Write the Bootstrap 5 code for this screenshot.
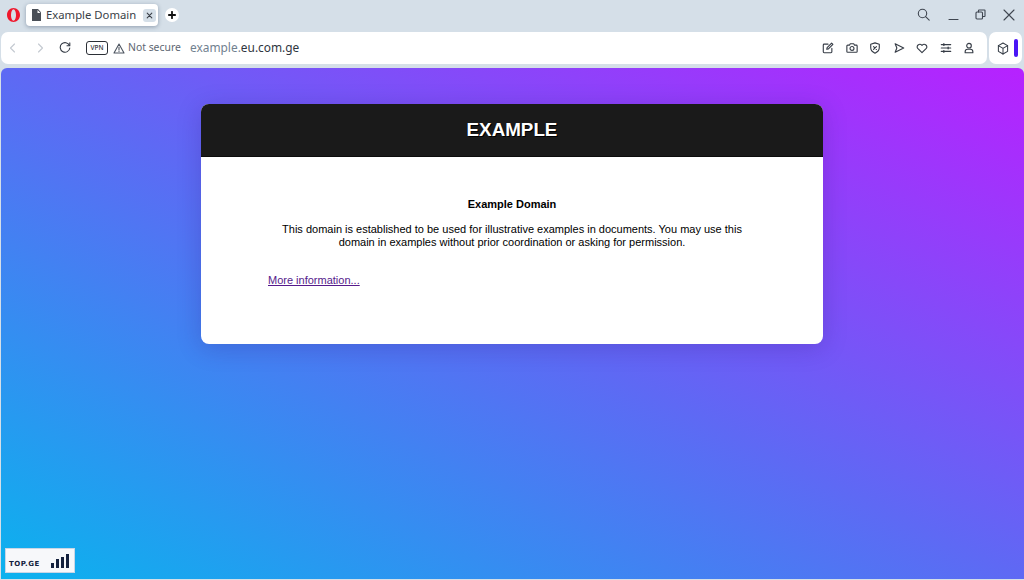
<!DOCTYPE html>
<html lang="en">
<head>
  <meta charset="UTF-8" />
  <meta name="viewport" content="width=device-width, initial-scale=1" />
  <title>Example Domain</title>
  <link href="https://cdn.jsdelivr.net/npm/bootstrap@5.3.0/dist/css/bootstrap.min.css" rel="stylesheet" />
  <style>
    html, body { height: 100%; overflow: hidden; }
    body { background: #d5dfe8; font-family: "Noto Sans", sans-serif; color: #3b4450; }
    svg { display: block; fill: none; stroke: currentColor; stroke-width: 1.1; stroke-linecap: round; stroke-linejoin: round; flex: none; }

    .tabstrip { height: 32px; padding: 4px 0 0 7px; }
    .opera-logo { margin-right: 6px; }
    .tab-pill { width: 132px; height: 22px; background: #fff; border-radius: 4px; box-shadow: 0 1px 4px rgba(40, 60, 90, .4); padding: 0 2px 0 5px; font-size: 11.3px; color: #3a3f47; white-space: nowrap; }
    .tab-x { width: 13px; height: 13px; background: #d5dfe8; border-radius: 3px; }
    .new-tab { width: 14px; height: 14px; margin-left: 7px; background: #fff; border-radius: 50%; color: #111; }
    .win-btns { margin-right: 1px; }
    .win-btns > div { width: 28.5px; display: flex; justify-content: center; }

    .toolbar { height: 33px; margin-left: 1px; gap: 2px; }
    .addr-bar { width: 986px; height: 32px; background: #fff; border-radius: 7px; padding: 0 12px 0 7px; }
    .side-box { width: 33px; height: 32px; background: #fff; border-radius: 7px; padding-left: 8px; gap: 5px; }
    .side-pip { width: 4px; height: 18px; background: #4a16f5; border-radius: 2px; }
    .vpn-tag { width: 22px; height: 14px; border: 1px solid #2b2f36; border-radius: 3px; font-size: 6.5px; font-weight: 500; line-height: 12px; text-align: center; color: #2b2f36; margin: 0 5px 0 15px; }
    .not-secure { font-size: 10.4px; color: #5d6672; width: 53px; white-space: nowrap; margin-left: 3px; }
    .url-text { font-size: 11.9px; color: #2f3640; margin-left: 9px; white-space: nowrap; }
    .url-text span { color: #71818f; }
    .tool-icons { gap: 11.5px; color: #363c46; }
    .tool-icons svg { stroke-width: 1.3; }

    .stage { height: 511px; margin: 3px 0 1px 1px; border-radius: 6px 6px 0 0; background: linear-gradient(to top right, #0bb2ee 0%, #5e69f4 50%, #b721ff 100%); padding: 36px 1px 0 0; font-family: "Liberation Sans", Arial, sans-serif; }
    .site-card { width: 622px; height: 240px; margin: 0 auto; background: #fff; border-radius: 8px; overflow: hidden; box-shadow: 0 4px 24px rgba(40, 20, 120, .22); color: #000; flex: none; }
    .site-head { height: 53px; background: #1a1a1a; border-bottom: 1px solid #0c0c0c; color: #fff; font-size: 18.8px; font-weight: 700; line-height: 52px; text-align: center; text-shadow: 1px 1px 0 #000; }
    .site-body { font-size: 11px; line-height: 13px; padding: 40px 67px 0; }
    .site-body h1 { font-size: 11px; font-weight: 700; line-height: 14px; margin: 0 0 12px; text-align: center; }
    .site-body p { width: 488px; text-align: center; margin: 0 0 25px; }
    .site-body a { color: #551a8b; }
    .topge-badge { width: 70px; height: 25px; margin: auto 0 6px 4px; background: #f7f8fa; border: 1px solid #c9d6e6; padding: 0 5px 4px 3px; color: #14213d; }
    .topge-badge b { font-family: "DejaVu Sans", sans-serif; font-size: 7px; letter-spacing: .5px; line-height: 1; }
    .topge-bars { gap: 1.500px; }
    .topge-bars i { display: block; width: 3.500px; background: #14213d; }
  </style>
</head>
<body>
  <div class="tabstrip d-flex align-items-start">
    <svg class="opera-logo mt-1" width="13" height="14" viewBox="0 0 13 14" style="stroke:none"><path fill="#f0182d" fill-rule="evenodd" d="M6.5 0C10.1 0 13 3.1 13 7s-2.9 7-6.5 7S0 10.900 0 7 2.900 0 6.500 0zm0 1.300C5.100 1.300 4 3.800 4 7s1.100 5.700 2.500 5.700S9 10.200 9 7 7.900 1.300 6.500 1.300z"/></svg>
    <div class="tab-pill d-flex align-items-center">
      <svg class="me-1" width="11" height="12" viewBox="0 0 11 12" style="stroke:none"><path fill="#4a4f57" d="M1 0h6l3 3.200V12H1zM6.500 1v3H9.500z"/></svg>
      <span class="flex-grow-1">Example Domain</span>
      <div class="tab-x d-flex align-items-center justify-content-center"><svg width="7" height="7" viewBox="0 0 7 7"><path d="M1.200 1.200l4.600 4.600M5.800 1.200L1.200 5.800"/></svg></div>
    </div>
    <div class="new-tab d-flex align-items-center justify-content-center mt-1"><svg width="8" height="8" viewBox="0 0 8 8" style="stroke-width:1.800"><path d="M4 .8v6.400M.8 4h6.400"/></svg></div>
    <div class="win-btns d-flex ms-auto mt-1 align-items-center" style="color:#3f4650">
      <div><svg width="13" height="13" viewBox="0 0 13 13"><circle cx="5.500" cy="5.500" r="4.200"/><path d="M8.600 8.600l3.600 3.600"/></svg></div>
      <div><svg class="ms-1" width="11" height="13" viewBox="0 0 11 13"><path d="M1 11.500h9"/></svg></div>
      <div><svg width="11" height="11" viewBox="0 0 11 11"><rect x="1" y="3" width="6.500" height="7" rx="1"/><path d="M3.500 3V1.500a.5.500 0 0 1 .5-.5h5.500a.5.500 0 0 1 .5.500V7a.5.500 0 0 1-.5.500H7.500"/></svg></div>
      <div><svg width="12" height="12" viewBox="0 0 12 12"><path d="M1 1l10 10M11 1L1 11"/></svg></div>
    </div>
  </div>

  <div class="toolbar d-flex">
    <div class="addr-bar d-flex align-items-center">
      <svg width="7" height="10" viewBox="0 0 7 10" style="color:#c3c9d0;margin-left:1px"><path d="M5.500 1L1.500 5l4 4"/></svg>
      <svg width="7" height="10" viewBox="0 0 7 10" style="color:#c3c9d0;margin-left:21px"><path d="M1.500 1l4 4-4 4"/></svg>
      <svg width="12" height="12" viewBox="0 0 12 12" style="color:#333a44;margin-left:15px"><path d="M10.400 3.400A4.800 4.800 0 1 0 10.800 6"/><path d="M10.800 .9v2.800H8"/></svg>
      <div class="vpn-tag">VPN</div>
      <svg width="12" height="11" viewBox="0 0 12 11" style="color:#4d5560"><path d="M6 1l5 9H1z"/><path d="M6 4.300v2.700M6 8.400v.1"/></svg>
      <div class="not-secure">Not secure</div>
      <div class="url-text"><span>example.</span>eu.com.ge</div>
      <div class="tool-icons d-flex align-items-center ms-auto">
        <svg width="12" height="12" viewBox="0 0 14 14"><path d="M7 2.500H2.500a1 1 0 0 0-1 1v8a1 1 0 0 0 1 1h8a1 1 0 0 0 1-1V7.500"/><path d="M5.500 8.500l.5-2L11.200 1.300l1.500 1.500L7.500 8z"/></svg>
        <svg width="12" height="12" viewBox="0 0 14 14"><path d="M1 4.700a1 1 0 0 1 1-1h2l1-1.700h4l1 1.700h2a1 1 0 0 1 1 1v6.300a1 1 0 0 1-1 1H2a1 1 0 0 1-1-1z"/><circle cx="7" cy="7.500" r="2.300"/></svg>
        <svg width="12" height="12" viewBox="0 0 14 14"><path d="M7 1l5 1.600v4.200c0 3-2.200 5-5 6.200-2.800-1.200-5-3.200-5-6.200V2.600z"/><path d="M5.300 5.300l3.400 3.400M8.700 5.300L5.300 8.700"/></svg>
        <svg width="12" height="12" viewBox="0 0 14 14"><path d="M2.500 2l10 5-10 5 2-5z"/></svg>
        <svg width="12" height="12" viewBox="0 0 14 14"><path d="M7 12.300L2 7.400C-.3 4.800 3.900.7 7 3.900c3.100-3.200 7.300.900 5 3.500z"/></svg>
        <svg width="12" height="12" viewBox="0 0 14 14"><path d="M1.500 3h11M1.500 7h11M1.500 11h11"/><path d="M4.500 2v2M9.500 6v2M4.500 10v2" style="stroke-width:1.500"/></svg>
        <svg width="12" height="12" viewBox="0 0 14 14"><circle cx="7" cy="4.300" r="2.700"/><path d="M2.500 12.500v-1.200A2.800 2.800 0 0 1 5.300 8.500h3.400a2.800 2.800 0 0 1 2.800 2.800v1.200z"/></svg>
      </div>
    </div>
    <div class="side-box d-flex align-items-center">
      <svg width="12" height="13" viewBox="0 0 13 14" style="color:#333a44"><path d="M6.500 1l5 2.900v6.200l-5 2.900-5-2.900V3.900z"/><path d="M1.500 3.900l5 2.900 5-2.900M6.500 6.800V13"/></svg>
      <div class="side-pip"></div>
    </div>
  </div>

  <div class="stage d-flex flex-column">
    <div class="site-card">
      <div class="site-head">EXAMPLE</div>
      <div class="site-body">
        <h1>Example Domain</h1>
        <p class="mx-auto">This domain is established to be used for illustrative examples in documents. You may use this domain in examples without prior coordination or asking for permission.</p>
        <a href="#">More information...</a>
      </div>
    </div>
    <div class="topge-badge d-flex align-items-end justify-content-between">
      <b>TOP.GE</b>
      <div class="topge-bars d-flex align-items-end">
        <i style="height:5px"></i><i style="height:9px"></i><i style="height:11px"></i><i style="height:14px"></i>
      </div>
    </div>
  </div>

  <script src="https://cdn.jsdelivr.net/npm/bootstrap@5.3.0/dist/js/bootstrap.bundle.min.js"></script>
</body>
</html>
